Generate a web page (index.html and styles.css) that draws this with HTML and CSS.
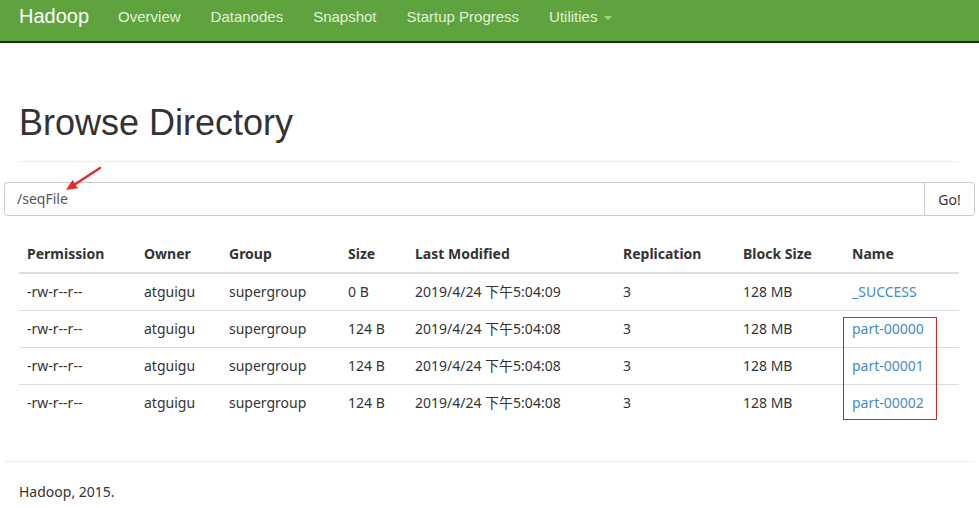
FILE: index.html
```html
<!DOCTYPE html>
<html>
<head>
<meta charset="utf-8">
<title>Browsing HDFS</title>
<link rel="stylesheet" href="styles.css">
</head>
<body>
<header class="navbar">
  <a class="brand">Hadoop</a>
  <nav class="nav">
    <a>Overview</a>
    <a>Datanodes</a>
    <a>Snapshot</a>
    <a>Startup Progress</a>
    <a>Utilities <span class="caret"></span></a>
  </nav>
</header>
<main class="container">
  <div class="page-header">
    <h1>Browse Directory</h1>
  </div>
  <div class="input-group">
    <div class="path">/seqFile</div>
    <button class="go">Go!</button>
    <svg class="arrow" width="44" height="30" viewBox="0 0 44 30">
      <line x1="36" y1="2" x2="10" y2="19" stroke="#e52b2b" stroke-width="2.5" stroke-linecap="round"/>
      <polygon points="2,24 8.5,13.9 13.9,22.3" fill="#e52b2b"/>
    </svg>
  </div>
  <table class="listing">
    <thead>
      <tr><th class="c1">Permission</th><th class="c2">Owner</th><th class="c3">Group</th><th class="c4">Size</th><th class="c5">Last Modified</th><th class="c6">Replication</th><th class="c7">Block Size</th><th class="c8">Name</th></tr>
    </thead>
    <tbody>
      <tr><td>-rw-r--r--</td><td>atguigu</td><td>supergroup</td><td>0 B</td><td>2019/4/24 下午5:04:09</td><td>3</td><td>128 MB</td><td><a>_SUCCESS</a></td></tr>
      <tr><td>-rw-r--r--</td><td>atguigu</td><td>supergroup</td><td>124 B</td><td>2019/4/24 下午5:04:08</td><td>3</td><td>128 MB</td><td class="marked"><a>part-00000</a><div class="redbox"></div></td></tr>
      <tr><td>-rw-r--r--</td><td>atguigu</td><td>supergroup</td><td>124 B</td><td>2019/4/24 下午5:04:08</td><td>3</td><td>128 MB</td><td><a>part-00001</a></td></tr>
      <tr><td>-rw-r--r--</td><td>atguigu</td><td>supergroup</td><td>124 B</td><td>2019/4/24 下午5:04:08</td><td>3</td><td>128 MB</td><td><a>part-00002</a></td></tr>
    </tbody>
  </table>
</main>
<footer class="footer">
  <p>Hadoop, 2015.</p>
</footer>
</body>
</html>
```
FILE: styles.css
```css
* { box-sizing: border-box; }
body {
  margin: 0;
  font-family: "Noto Sans", "Noto Sans CJK SC", sans-serif;
  font-size: 14px;
  color: #333;
  background: #fff;
}
.navbar {
  height: 43px;
  background: #5fa33e;
  border-bottom: 2px solid #1f2a1a;
  display: flex;
  align-items: center;
  gap: 29px;
  padding: 0 0 8px 19px;
  font-family: "Liberation Sans", Arial, sans-serif;
}
.brand {
  color: #fff;
  font-size: 20px;
}
.nav { display: flex; gap: 30px; }
.nav a {
  color: #e3f1dc;
  font-size: 15px;
}
.caret {
  display: inline-block;
  width: 0; height: 0;
  border-left: 4px solid transparent;
  border-right: 4px solid transparent;
  border-top: 4px solid #a9cf94;
  vertical-align: middle;
  margin-left: 2px;
}
.container {
  width: 940px;
  margin-left: 19px;
}
.page-header {
  margin-top: 56px;
  border-bottom: 1px solid #eee;
  padding-bottom: 14px;
}
.page-header h1 {
  margin: 0;
  font-family: "Liberation Sans", Arial, sans-serif;
  font-weight: 400;
  font-size: 36px;
  line-height: 48px;
  color: #333;
}
.input-group {
  position: relative;
  display: flex;
  margin: 20px -16px 0 -15px;
  height: 34px;
}
.path {
  flex: 1;
  border: 1px solid #ccc;
  border-right: none;
  border-radius: 4px 0 0 4px;
  padding: 6px 12px;
  line-height: 20px;
  color: #555;
}
.go {
  width: 51px;
  border: 1px solid #ccc;
  border-radius: 0 4px 4px 0;
  background: #fff;
  font-family: "Noto Sans", sans-serif;
  font-size: 14px;
  color: #333;
  padding: 0;
}
.arrow {
  position: absolute;
  left: 60px;
  top: -16px;
}
.listing {
  width: 940px;
  margin-top: 20px;
  border-collapse: collapse;
}
.listing th, .listing td {
  text-align: left;
  padding: 8px;
  line-height: 20px;
  border-top: 1px solid #ddd;
}
.listing th {
  border-top: none;
  border-bottom: 2px solid #ddd;
  font-weight: 700;
  padding-bottom: 8px;
}
.listing a { color: #428bca; }
.c1 { width: 117px; }
.c2 { width: 85px; }
.c3 { width: 119px; }
.c4 { width: 67px; }
.c5 { width: 208px; }
.c6 { width: 120px; }
.c7 { width: 109px; }
.marked { position: relative; }
.redbox {
  position: absolute;
  left: -1px;
  top: 6px;
  width: 94px;
  height: 103px;
  border: 1px solid #e02424;
}
.footer {
  margin: 40px 4px 0 4px;
  border-top: 1px solid #eee;
}
.footer p {
  margin: 20px 0 0 15px;
  line-height: 20px;
}
```
